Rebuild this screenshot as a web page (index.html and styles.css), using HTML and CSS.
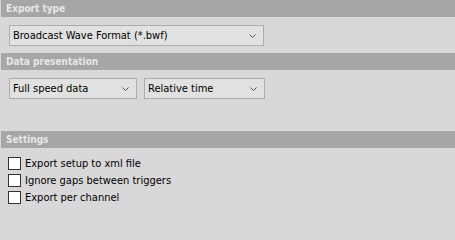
FILE: index.html
```html
<!DOCTYPE html>
<html>
<head>
<meta charset="utf-8">
<link rel="stylesheet" href="styles.css">
</head>
<body>
<div class="panel">
  <div class="hdr">Export type</div>
  <div class="sec">
    <div class="combo wide"><span>Broadcast Wave Format (*.bwf)</span><svg class="chev" width="7" height="4" viewBox="0 0 7 4"><path d="M0.5 0.5 L3.5 3.5 L6.5 0.5" fill="none" stroke="#555" stroke-width="1"/></svg></div>
  </div>
  <div class="hdr">Data presentation</div>
  <div class="sec row">
    <div class="combo a"><span>Full speed data</span><svg class="chev" width="7" height="4" viewBox="0 0 7 4"><path d="M0.5 0.5 L3.5 3.5 L6.5 0.5" fill="none" stroke="#555" stroke-width="1"/></svg></div>
    <div class="combo b"><span>Relative time</span><svg class="chev" width="7" height="4" viewBox="0 0 7 4"><path d="M0.5 0.5 L3.5 3.5 L6.5 0.5" fill="none" stroke="#555" stroke-width="1"/></svg></div>
  </div>
  <div class="spacer"></div>
  <div class="hdr">Settings</div>
  <div class="checks">
    <label class="chk"><span class="box"></span>Export setup to xml file</label>
    <label class="chk"><span class="box"></span>Ignore gaps between triggers</label>
    <label class="chk"><span class="box"></span>Export per channel</label>
  </div>
</div>
</body>
</html>
```
FILE: styles.css
```css
html, body {
  margin: 0;
  padding: 0;
  background: #d9d7da;
}
.panel {
  width: 455px;
  height: 207px;
  font-family: "DejaVu Sans Condensed", "DejaVu Sans", sans-serif;
  font-size: 11px;
  color: #000;
  overflow: hidden;
}
.hdr {
  height: 17px;
  line-height: 17px;
  margin-left: 1px;
  padding-left: 5px;
  background: #a6a6a6;
  color: #e6e6e6;
  font-weight: bold;
  font-size: 10px;
}
.sec {
  padding: 8px 0 7px 9px;
}
.row {
  display: flex;
  gap: 7px;
}
.combo {
  box-sizing: border-box;
  height: 21px;
  border: 1px solid #adadad;
  background: #e1e1e1;
  display: flex;
  align-items: center;
  justify-content: space-between;
  padding: 0 7px 0 3px;
}
.combo span {
  line-height: 19px;
}
.chev {
  display: block;
}
.wide { width: 255px; }
.a { width: 128px; }
.b { width: 121px; }
.spacer {
  height: 25px;
}
.checks {
  padding: 9px 0 0 8px;
  display: flex;
  flex-direction: column;
  gap: 4px;
}
.chk {
  display: flex;
  align-items: center;
  height: 13px;
  gap: 4px;
}
.box {
  box-sizing: border-box;
  width: 13px;
  height: 13px;
  border: 1px solid #333;
  background: #fff;
}
```
